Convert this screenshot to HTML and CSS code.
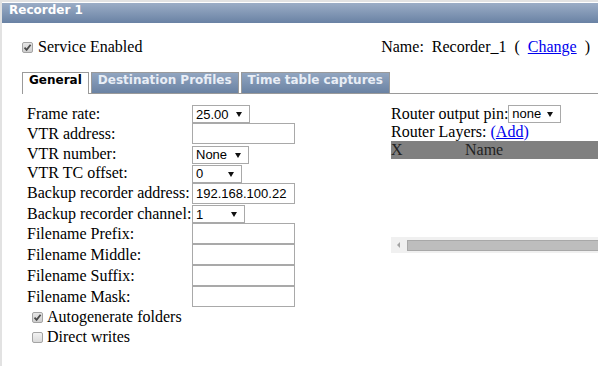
FILE: index.html
```html
<!DOCTYPE html>
<html>
<head>
<meta charset="utf-8">
<title>Recorder 1</title>
<link rel="stylesheet" href="styles.css">
</head>
<body>
<div class="panel">
  <div class="hd">Recorder 1</div>
  <div class="toprow">
    <label class="chk"><span class="cb on"><svg viewBox="0 0 9 9" width="9" height="9"><path d="M1.5 4.6 L3.6 6.8 L7.6 1.8" fill="none" stroke="#4a4a4a" stroke-width="1.8"/></svg></span>Service Enabled</label>
    <div class="name">Name:&nbsp; Recorder_1&nbsp; (&nbsp; <a href="#">Change</a>&nbsp; )</div>
  </div>
  <div class="tabs">
    <span class="tab active">General</span>
    <span class="tab">Destination Profiles</span>
    <span class="tab">Time table captures</span>
  </div>
  <div class="content">
    <div class="left">
      <table class="form">
        <tr class="s"><td class="lbl">Frame rate:</td><td><span class="sel w58"><select><option>25.00</option></select></span></td></tr>
        <tr class="i"><td class="lbl">VTR address:</td><td><input type="text" value=""></td></tr>
        <tr class="s"><td class="lbl">VTR number:</td><td><span class="sel w57"><select><option>None</option></select></span></td></tr>
        <tr class="s"><td class="lbl">VTR TC offset:</td><td><span class="sel w50"><select><option>0</option></select></span></td></tr>
        <tr class="i"><td class="lbl">Backup recorder address:</td><td><input type="text" value="192.168.100.22"></td></tr>
        <tr class="s"><td class="lbl">Backup recorder channel:</td><td><span class="sel w53"><select><option>1</option></select></span></td></tr>
        <tr class="i"><td class="lbl">Filename Prefix:</td><td><input type="text" value=""></td></tr>
        <tr class="i"><td class="lbl">Filename Middle:</td><td><input type="text" value=""></td></tr>
        <tr class="i"><td class="lbl">Filename Suffix:</td><td><input type="text" value=""></td></tr>
        <tr class="i"><td class="lbl">Filename Mask:</td><td><input type="text" value=""></td></tr>
      </table>
      <div class="opts">
        <label class="opt"><span class="cb on"><svg viewBox="0 0 9 9" width="9" height="9"><path d="M1.5 4.6 L3.6 6.8 L7.6 1.8" fill="none" stroke="#4a4a4a" stroke-width="1.8"/></svg></span>Autogenerate folders</label>
        <label class="opt"><span class="cb"></span>Direct writes</label>
      </div>
    </div>
    <div class="right">
      <div class="rl1">Router output pin:<span class="sel w53"><select><option>none</option></select></span></div>
      <div class="rl2">Router Layers: <span class="paren">(<a href="#">Add</a>)</span></div>
      <div class="thead"><span class="colx">X</span><span>Name</span></div>
      <div class="tbody"></div>
      <div class="sb"><span class="arr"></span><span class="thumb"></span></div>
    </div>
  </div>
</div>
</body>
</html>
```
FILE: styles.css
```css
html, body {
  margin: 0;
  height: 100%;
  overflow: hidden;
  background: #fff;
}
body {
  font-family: "Liberation Serif", "Times New Roman", serif;
  font-size: 16px;
  color: #000;
}
a { color: #0000ee; text-decoration: underline; }

.panel {
  box-sizing: border-box;
  width: 598px;
  height: 100%;
  border-top: 2px solid #e2e2e2;
  border-left: 2px solid #e2e2e2;
}
.hd {
  margin-top: 1px;
  height: 20px;
  line-height: 20px;
  padding-left: 7px;
  background: linear-gradient(#9badc6, #6982a4);
  color: #fff;
  font: bold 12px "DejaVu Sans", Verdana, sans-serif;
}
.toprow {
  display: flex;
  justify-content: space-between;
  align-items: center;
  height: 18px;
  margin-top: 15px;
  padding: 0 8px 0 20px;
  white-space: nowrap;
}
.chk { display: flex; align-items: center; line-height: 18px; }
.chk .cb { margin-right: 5px; }
.cb {
  box-sizing: border-box;
  width: 11px;
  height: 11px;
  border: 1px solid #a4a4a4;
  border-radius: 2px;
  background: linear-gradient(#f2f2f2, #dadada);
  display: inline-flex;
  align-items: center;
  justify-content: center;
  flex: none;
}
.cb.on { background: linear-gradient(#e6e6e6, #cfcfcf); }
.cb svg { display: block; }

.tabs {
  display: flex;
  gap: 2px;
  height: 21px;
  margin: 16px 0 0 20px;
  border-bottom: 1px solid #9a9a9a;
}
.tab {
  height: 20px;
  line-height: 20px;
  padding: 0 6px;
  border: 1px solid #9a9a9a;
  border-bottom: 0;
  background: linear-gradient(#91a5c0, #6a82a3);
  color: #e9eef6;
  font: bold 12px "DejaVu Sans", Verdana, sans-serif;
  white-space: nowrap;
}
.tab.active {
  height: 21px;
  background: #fff;
  color: #000;
}

.content {
  display: flex;
  margin-top: 10px;
  padding-left: 25px;
}
.left { width: 364px; flex: none; }
.form { border-collapse: collapse; }
.form td { padding: 0; vertical-align: middle; }
.form .lbl { width: 165px; white-space: nowrap; }
.form tr.s td { height: 19px; }
.form tr.i td { height: 21px; }

.sel { position: relative; display: inline-block; vertical-align: middle; }
.sel select {
  -webkit-appearance: none;
  appearance: none;
  display: block;
  box-sizing: border-box;
  height: 18px;
  margin: 0;
  padding: 0 0 0 3px;
  border: 1px solid #a9a9a9;
  border-radius: 0;
  background: #fff;
  color: #000;
  font: 13px "Liberation Sans", Arial, sans-serif;
  width: 100%;
}
.sel::after {
  content: "";
  position: absolute;
  right: 8px;
  top: 7px;
  border-left: 3px solid transparent;
  border-right: 3px solid transparent;
  border-top: 5px solid #111;
}
.w58 { width: 58px; }
.w57 { width: 57px; }
.w50 { width: 50px; }
.w53 { width: 53px; }

.form input {
  display: block;
  box-sizing: border-box;
  width: 103px;
  height: 21px;
  margin: 0;
  padding: 0 3px;
  border: 1px solid #a9a9a9;
  font: 13px "Liberation Sans", Arial, sans-serif;
  color: #000;
}

.opts { padding-left: 5px; }
.opt { height: 20px; display: flex; align-items: center; white-space: nowrap; }
.opt .cb { margin-right: 4px; }

.right { width: 230px; flex: none; white-space: nowrap; }
.rl1 { height: 19px; display: flex; align-items: center; }
.rl2 { height: 18px; line-height: 18px; }
.paren { color: #0000ee; }
.thead {
  display: flex;
  height: 18px;
  line-height: 18px;
  background: #808080;
  color: #222;
}
.colx { width: 74px; }
.tbody { height: 78px; }
.sb {
  display: flex;
  align-items: center;
  height: 16px;
  background: #f0f0f0;
}
.sb .arr {
  width: 0;
  height: 0;
  margin-left: 6px;
  border-top: 3px solid transparent;
  border-bottom: 3px solid transparent;
  border-right: 3px solid #a3a3a3;
}
.sb .thumb {
  flex: 1;
  box-sizing: border-box;
  height: 11px;
  margin-left: 7px;
  background: #bdbdbd;
  border: 1px solid #a8a8a8;
}
```
